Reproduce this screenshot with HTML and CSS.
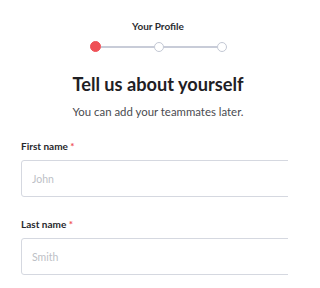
FILE: index.html
```html
<!DOCTYPE html>
<html>
<head>
<meta charset="utf-8">
<link rel="stylesheet" href="styles.css">
</head>
<body>
<div class="page">
  <div class="header">
    <div class="step-title">Your Profile</div>
    <div class="stepper">
      <span class="dot active"></span>
      <span class="line"></span>
      <span class="dot"></span>
      <span class="line"></span>
      <span class="dot"></span>
    </div>
    <h1 class="heading">Tell us about yourself</h1>
    <p class="subtitle">You can add your teammates later.</p>
  </div>
  <form class="form">
    <div class="field">
      <label class="label">First name <span class="req">*</span></label>
      <input class="input" type="text" placeholder="John">
    </div>
    <div class="field">
      <label class="label">Last name <span class="req">*</span></label>
      <input class="input" type="text" placeholder="Smith">
    </div>
  </form>
</div>
</body>
</html>
```
FILE: styles.css
```css
html, body {
  margin: 0;
  padding: 0;
  background: #ffffff;
}
.page {
  width: 288px;
  height: 288px;
  overflow: hidden;
  box-sizing: border-box;
  padding: 19px 0 0 21px;
  font-family: Lato, Inter, sans-serif;
  color: #222327;
}
.header {
  display: flex;
  flex-direction: column;
  align-items: center;
  margin-right: -7px;
}
.step-title {
  font-size: 10px;
  font-weight: 700;
  line-height: 14px;
  color: #2b2c30;
}
.stepper {
  display: flex;
  align-items: center;
  margin-top: 8px;
  height: 11px;
}
.dot {
  width: 10px;
  height: 10px;
  border-radius: 50%;
  box-sizing: border-box;
  border: 1.5px solid #c3c8d4;
  background: #ffffff;
}
.dot.active {
  width: 11px;
  height: 11px;
  background: #ef5056;
  border-color: #ef5056;
}
.line {
  width: 53px;
  height: 2px;
  background: #c8ccd8;
}
.heading {
  margin: 20px 0 0 0;
  font-size: 18.2px;
  font-weight: 700;
  line-height: 24px;
  color: #1f2024;
}
.subtitle {
  margin: 8px 0 0 0;
  font-size: 11.4px;
  line-height: 16px;
  color: #4a4b50;
}
.form {
  display: flex;
  flex-direction: column;
  gap: 20px;
  margin-top: 19px;
  margin-right: -28px;
}
.field {
  display: flex;
  flex-direction: column;
  gap: 7px;
}
.label {
  font-size: 10px;
  font-weight: 700;
  line-height: 14px;
  color: #27282c;
}
.req {
  color: #ef5056;
}
.input {
  height: 37px;
  box-sizing: border-box;
  border: 1px solid #d5d8e0;
  border-radius: 3px;
  padding: 0 10px;
  font-family: Lato, Inter, sans-serif;
  font-size: 10.5px;
  color: #222;
  outline: none;
}
.input::placeholder {
  color: #bdbfc6;
}
```
